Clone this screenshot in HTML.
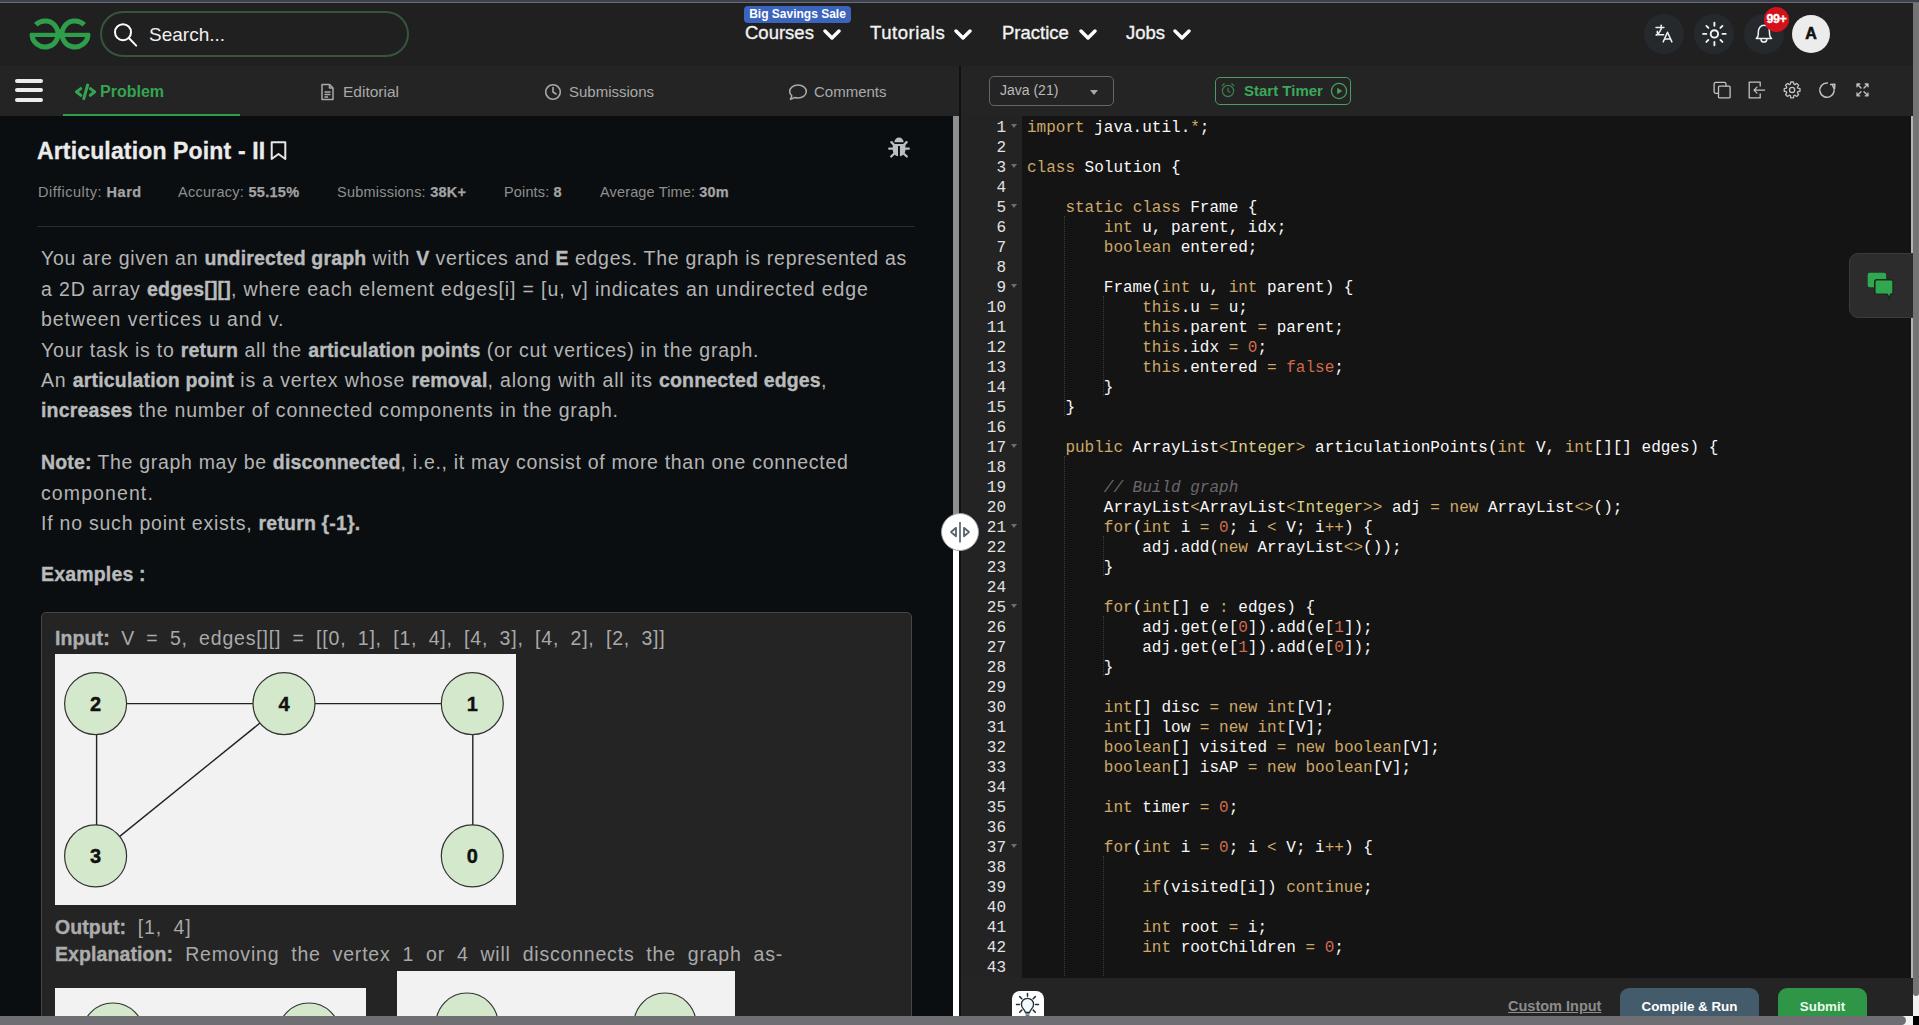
<!DOCTYPE html>
<html><head><meta charset="utf-8">
<style>
*{box-sizing:border-box;margin:0;padding:0}
html,body{width:1919px;height:1025px;overflow:hidden;background:#0b0e10;font-family:"Liberation Sans",sans-serif}
.a{position:absolute}
.nw{white-space:nowrap}
#topstrip{left:0;top:0;width:1919px;height:3px;background:#3c3f4c}
#topstrip2{left:0;top:2px;width:1919px;height:1px;background:#6a6c78}
#header{left:0;top:3px;width:1913px;height:63px;background:#202020}
#tabbar{left:0;top:66px;width:953px;height:50px;background:#242424}
#tooldbar{left:961px;top:66px;width:952px;height:50px;background:#242424}
#leftpane{left:0;top:116px;width:953px;height:900px;background:#0b0e10;overflow:hidden}
#rscroll{left:1913px;top:3px;width:6px;height:993px;background:#747474;border-radius:0 0 3px 3px}
#hscroll{left:0;top:1016px;width:1906px;height:9px;background:#6f6e73;border-radius:0 5px 5px 0}
.navt{color:#f2f2f2;font-size:18.5px;top:22.2px;-webkit-text-stroke:0.35px #f2f2f2}
.chev{top:29px}
.circ{width:40px;height:40px;border-radius:50%;background:#25292d;top:14px}
.tab{top:83px;font-size:15px;color:#a9a9a9}
</style></head><body>
<div class="a" id="topstrip"></div><div class="a" id="topstrip2"></div>
<div class="a" id="header"></div>
<!-- logo -->
<svg class="a" style="left:0;top:0" width="100" height="60" viewBox="0 0 100 60">
 <g fill="none" stroke="#2f9e4b" stroke-width="5">
  <path d="M35.8,24.8 A13,13 0 1 1 32,34"/>
  <path d="M84.2,24.8 A13,13 0 1 0 88,34"/>
 </g>
 <rect x="30" y="32.8" width="60" height="4.2" fill="#2f9e4b"/>
</svg>
<!-- search -->
<div class="a" style="left:100px;top:11px;width:309px;height:46px;border:2px solid #37553d;border-radius:23px"></div>
<svg class="a" style="left:110px;top:20px" width="30" height="30" viewBox="0 0 30 30">
 <circle cx="13" cy="12.2" r="8" fill="none" stroke="#fff" stroke-width="2"/>
 <line x1="18.8" y1="18" x2="26.2" y2="25.6" stroke="#fff" stroke-width="2" stroke-linecap="round"/>
</svg>
<div class="a nw" style="left:149px;top:23.5px;font-size:19px;color:#f0f0f0">Search...</div>
<!-- nav -->
<div class="a nw" style="left:744px;top:6px;width:107px;height:17px;background:#3b64bd;border-radius:4px;color:#fff;font-size:12px;line-height:17px;text-align:center;font-weight:bold">Big Savings Sale</div>
<div class="a nw navt" style="left:745px">Courses</div>
<div class="a nw navt" style="left:870px;letter-spacing:0.55px">Tutorials</div>
<div class="a nw navt" style="left:1002px">Practice</div>
<div class="a nw navt" style="left:1126px">Jobs</div>
<svg class="a chev" style="left:823px" width="18" height="11" viewBox="0 0 18 11"><path d="M2,2 L9,9 L16,2" fill="none" stroke="#fff" stroke-width="3.4" stroke-linecap="round" stroke-linejoin="round"/></svg>
<svg class="a chev" style="left:954px" width="18" height="11" viewBox="0 0 18 11"><path d="M2,2 L9,9 L16,2" fill="none" stroke="#fff" stroke-width="3.4" stroke-linecap="round" stroke-linejoin="round"/></svg>
<svg class="a chev" style="left:1079px" width="18" height="11" viewBox="0 0 18 11"><path d="M2,2 L9,9 L16,2" fill="none" stroke="#fff" stroke-width="3.4" stroke-linecap="round" stroke-linejoin="round"/></svg>
<svg class="a chev" style="left:1173px" width="18" height="11" viewBox="0 0 18 11"><path d="M2,2 L9,9 L16,2" fill="none" stroke="#fff" stroke-width="3.4" stroke-linecap="round" stroke-linejoin="round"/></svg>
<!-- right header icons -->
<div class="a circ" style="left:1644px"></div>
<div class="a circ" style="left:1694px"></div>
<div class="a circ" style="left:1744px"></div>
<div class="a" style="left:1792px;top:15px;width:38px;height:38px;border-radius:50%;background:#ececec;color:#111;font-weight:bold;font-size:16px;line-height:38px;text-align:center;-webkit-text-stroke:0.6px #111">A</div>


<div class="a" id="tabbar"></div>
<div class="a" id="tooldbar"></div>
<div class="a" id="leftpane"></div>
<!-- tabs -->
<div class="a" style="left:15px;top:79px;width:28px;height:4px;border-radius:2px;background:#ececec"></div>
<div class="a" style="left:15px;top:88px;width:28px;height:4px;border-radius:2px;background:#ececec"></div>
<div class="a" style="left:15px;top:98px;width:28px;height:4px;border-radius:2px;background:#ececec"></div>
<div class="a" style="left:63px;top:114px;width:177px;height:2px;background:#2f9e4b"></div>
<svg class="a" style="left:74px;top:83px" width="24" height="18" viewBox="0 0 24 18"><g fill="none" stroke="#34a452" stroke-width="3" stroke-linecap="round" stroke-linejoin="round"><path d="M6.8,5.6 L2.4,8.9 L6.8,12.3"/><path d="M16.3,5.6 L20.7,8.9 L16.3,12.3"/><path d="M13.6,2 L9.8,15.6"/></g></svg>
<div class="a nw" style="left:100px;top:83.3px;font-size:16px;font-weight:bold;color:#34a452">Problem</div>
<svg class="a" style="left:320px;top:83px" width="15" height="18" viewBox="0 0 15 18">
 <g fill="none" stroke="#a9a9a9" stroke-width="1.5" stroke-linejoin="round"><path d="M2,1.5 H9.5 L13,5 V16.5 H2 Z"/><path d="M9.5,1.5 V5 H13"/><path d="M4.5,9 H10.5 M4.5,11.5 H10.5 M4.5,14 H8"/></g>
</svg>
<div class="a nw tab" style="left:343px;font-size:15.5px">Editorial</div>
<svg class="a" style="left:544px;top:83px" width="18" height="18" viewBox="0 0 18 18">
 <g fill="none" stroke="#a9a9a9" stroke-width="1.6" stroke-linecap="round"><circle cx="9" cy="9" r="7.3"/><path d="M9,4.5 V9 L12,11"/></g>
</svg>
<div class="a nw tab" style="left:569px">Submissions</div>
<svg class="a" style="left:788px;top:83px" width="20" height="18" viewBox="0 0 20 18">
 <path d="M10,2 C14.6,2 18.3,4.9 18.3,8.5 C18.3,12.1 14.6,15 10,15 C8.9,15 7.9,14.8 6.9,14.5 L2.5,16.3 L3.8,12.8 C2.4,11.6 1.7,10.1 1.7,8.5 C1.7,4.9 5.4,2 10,2 Z" fill="none" stroke="#a9a9a9" stroke-width="1.6" stroke-linejoin="round"/>
</svg>
<div class="a nw tab" style="left:814px">Comments</div>

<div class="a nw" style="left:37px;top:135.53px;font-size:23px;line-height:30px;color:#ebebeb;letter-spacing:0.15px;word-spacing:0.0px;font-weight:bold;-webkit-text-stroke:0.3px #ebebeb">Articulation Point - II</div>
<svg class="a" style="left:269px;top:140px" width="19" height="22" viewBox="0 0 19 22"><path d="M2.7,2.3 H16.3 V19 L9.5,14 L2.7,19 Z" fill="none" stroke="#e6e6e6" stroke-width="2" stroke-linejoin="round"/></svg>
<svg class="a" style="left:884px;top:132px" width="30" height="30" viewBox="0 0 30 30"><g fill="#bcbfc1">
<path d="M10.4,10.2 A4.6,4.6 0 0 1 19.6,10.2 Z"/>
<path d="M8.8,12 H21.4 V18 C21.4,21.8 18.6,24.3 15,24.3 C11.4,24.3 8.8,21.8 8.8,18 Z"/></g>
<rect x="14" y="14" width="1.9" height="11" fill="#0b0e10"/>
<g stroke="#bcbfc1" stroke-width="2.3" stroke-linecap="round" fill="none">
<path d="M7.4,10.1 L9.9,12.8 M22.6,10.1 L20.1,12.8 M5.2,16.7 H9 M24.8,16.7 H21 M7.2,24.5 L9.8,22 M22.8,24.5 L20.2,22"/>
</g></svg>
<div class="a nw" style="left:38px;top:177.48px;font-size:14.5px;line-height:30px;color:#8e8e8e;letter-spacing:0.5px;word-spacing:0.0px;">Difficulty: <b style="color:#a3a3a3;-webkit-text-stroke:0.25px #a3a3a3">Hard</b></div>
<div class="a nw" style="left:178px;top:177.48px;font-size:14.5px;line-height:30px;color:#8e8e8e;letter-spacing:0.28px;word-spacing:0.0px;">Accuracy: <b style="color:#a3a3a3;-webkit-text-stroke:0.25px #a3a3a3">55.15%</b></div>
<div class="a nw" style="left:337px;top:177.48px;font-size:14.5px;line-height:30px;color:#8e8e8e;letter-spacing:0.22px;word-spacing:0.0px;">Submissions: <b style="color:#a3a3a3;-webkit-text-stroke:0.25px #a3a3a3">38K+</b></div>
<div class="a nw" style="left:504px;top:177.48px;font-size:14.5px;line-height:30px;color:#8e8e8e;letter-spacing:0.14px;word-spacing:0.0px;">Points: <b style="color:#a3a3a3;-webkit-text-stroke:0.25px #a3a3a3">8</b></div>
<div class="a nw" style="left:600px;top:177.48px;font-size:14.5px;line-height:30px;color:#8e8e8e;letter-spacing:0.15px;word-spacing:0.0px;">Average Time: <b style="color:#a3a3a3;-webkit-text-stroke:0.25px #a3a3a3">30m</b></div>
<div class="a" style="left:37px;top:226px;width:878px;height:1px;background:#282c2d"></div>
<div class="a nw" style="left:41px;top:243.24px;font-size:19.5px;line-height:30px;color:#b4b4b4;letter-spacing:0.725px;word-spacing:0.0px;">You are given an <b style="color:#b9bbbc;letter-spacing:0.17px;-webkit-text-stroke:0.35px #b9bbbc">undirected graph</b> with <b style="color:#b9bbbc;letter-spacing:0.17px;-webkit-text-stroke:0.35px #b9bbbc">V</b> vertices and <b style="color:#b9bbbc;letter-spacing:0.17px;-webkit-text-stroke:0.35px #b9bbbc">E</b> edges. The graph is represented as</div>
<div class="a nw" style="left:41px;top:274.24px;font-size:19.5px;line-height:30px;color:#b4b4b4;letter-spacing:0.87px;word-spacing:0.0px;">a 2D array <b style="color:#b9bbbc;letter-spacing:0.17px;-webkit-text-stroke:0.35px #b9bbbc">edges[][]</b>, where each element edges[i] = [u, v] indicates an undirected edge</div>
<div class="a nw" style="left:41px;top:304.24px;font-size:19.5px;line-height:30px;color:#b4b4b4;letter-spacing:0.95px;word-spacing:0.0px;">between vertices u and v.</div>
<div class="a nw" style="left:41px;top:335.24px;font-size:19.5px;line-height:30px;color:#b4b4b4;letter-spacing:0.79px;word-spacing:0.0px;">Your task is to <b style="color:#b9bbbc;letter-spacing:0.17px;-webkit-text-stroke:0.35px #b9bbbc">return</b> all the <b style="color:#b9bbbc;letter-spacing:0.17px;-webkit-text-stroke:0.35px #b9bbbc">articulation points</b> (or cut vertices) in the graph.</div>
<div class="a nw" style="left:41px;top:365.24px;font-size:19.5px;line-height:30px;color:#b4b4b4;letter-spacing:0.84px;word-spacing:0.0px;">An <b style="color:#b9bbbc;letter-spacing:0.17px;-webkit-text-stroke:0.35px #b9bbbc">articulation point</b> is a vertex whose <b style="color:#b9bbbc;letter-spacing:0.17px;-webkit-text-stroke:0.35px #b9bbbc">removal</b>, along with all its <b style="color:#b9bbbc;letter-spacing:0.17px;-webkit-text-stroke:0.35px #b9bbbc">connected edges</b>,</div>
<div class="a nw" style="left:41px;top:395.24px;font-size:19.5px;line-height:30px;color:#b4b4b4;letter-spacing:0.81px;word-spacing:0.0px;"><b style="color:#b9bbbc;letter-spacing:0.17px;-webkit-text-stroke:0.35px #b9bbbc">increases</b> the number of connected components in the graph.</div>
<div class="a nw" style="left:41px;top:447.24px;font-size:19.5px;line-height:30px;color:#b4b4b4;letter-spacing:0.69px;word-spacing:0.0px;"><b style="color:#b9bbbc;letter-spacing:0.17px;-webkit-text-stroke:0.35px #b9bbbc">Note:</b> The graph may be <b style="color:#b9bbbc;letter-spacing:0.17px;-webkit-text-stroke:0.35px #b9bbbc">disconnected</b>, i.e., it may consist of more than one connected</div>
<div class="a nw" style="left:41px;top:478.24px;font-size:19.5px;line-height:30px;color:#b4b4b4;letter-spacing:1.1px;word-spacing:0.0px;">component.</div>
<div class="a nw" style="left:41px;top:508.24px;font-size:19.5px;line-height:30px;color:#b4b4b4;letter-spacing:0.77px;word-spacing:0.0px;">If no such point exists, <b style="color:#b9bbbc;letter-spacing:0.17px;-webkit-text-stroke:0.35px #b9bbbc">return {-1}.</b></div>
<div class="a nw" style="left:41px;top:559.24px;font-size:19.5px;line-height:30px;color:#b4b4b4;letter-spacing:0.47px;word-spacing:0.0px;"><b style="color:#b9bbbc;letter-spacing:0.17px;-webkit-text-stroke:0.35px #b9bbbc">Examples :</b></div>
<div class="a" style="left:41px;top:612px;width:871px;height:420px;background:#242424;border:1px solid #464646;border-radius:5px"></div>
<div class="a nw" style="left:55px;top:623.24px;font-size:19.5px;line-height:30px;color:#a9a9a9;letter-spacing:0.8px;word-spacing:5.16px;"><b style="color:#adadad;letter-spacing:0.1px;-webkit-text-stroke:0.35px #adadad">Input:</b> V = 5, edges[][] = [[0, 1], [1, 4], [4, 3], [4, 2], [2, 3]]</div>
<div class="a nw" style="left:55px;top:912.24px;font-size:19.5px;line-height:30px;color:#a9a9a9;letter-spacing:0.8px;word-spacing:5.5px;"><b style="color:#adadad;letter-spacing:0.1px;-webkit-text-stroke:0.35px #adadad">Output:</b> [1, 4]</div>
<div class="a nw" style="left:55px;top:939.24px;font-size:19.5px;line-height:30px;color:#a9a9a9;letter-spacing:0.8px;word-spacing:5.7px;"><b style="color:#adadad;letter-spacing:0.1px;-webkit-text-stroke:0.35px #adadad">Explanation:</b> Removing the vertex 1 or 4 will disconnects the graph as-</div>
<svg class="a" style="left:55px;top:654px" width="461" height="251" viewBox="0 0 461 251">
<rect width="461" height="251" fill="#f2f2f2"/>
<g stroke="#222" stroke-width="1.4">
<line x1="40.6" y1="49.6" x2="229" y2="49.6"/><line x1="229" y1="49.6" x2="417.3" y2="49.6"/>
<line x1="41.6" y1="49.6" x2="41.6" y2="201.9"/><line x1="417.8" y1="49.6" x2="417.8" y2="201.9"/>
<line x1="229" y1="49.6" x2="40.6" y2="201.9"/>
</g>
<g fill="#d4e8cc" stroke="#333" stroke-width="1.2">
<circle cx="40.6" cy="49.6" r="31"/><circle cx="229" cy="49.6" r="31"/><circle cx="417.3" cy="49.6" r="31"/>
<circle cx="40.6" cy="201.9" r="31"/><circle cx="417.3" cy="201.9" r="31"/>
</g>
<g font-family="Liberation Sans" font-weight="bold" font-size="20" fill="#111" text-anchor="middle" stroke="#111" stroke-width="0.4">
<text x="40.6" y="57">2</text><text x="229" y="57">4</text><text x="417.3" y="57">1</text><text x="40.6" y="209.3">3</text><text x="417.3" y="209.3">0</text>
</g></svg>
<svg class="a" style="left:55px;top:988px" width="311" height="40" viewBox="0 0 311 40"><rect width="311" height="40" fill="#f2f2f2"/>
<g fill="#d4e8cc" stroke="#333" stroke-width="1.2"><circle cx="58" cy="46" r="31"/><circle cx="254" cy="46" r="31"/></g></svg>
<svg class="a" style="left:397px;top:971px" width="338" height="50" viewBox="0 0 338 50"><rect width="338" height="50" fill="#f2f2f2"/>
<g fill="#d4e8cc" stroke="#333" stroke-width="1.2"><circle cx="70" cy="53" r="31"/><circle cx="268" cy="53" r="31"/></g></svg>
<style>
.code{font-family:"Liberation Mono",monospace;font-size:16px;line-height:20px;white-space:pre}
.code .ln,.code .cl{height:20px}
.kw{color:#CDA869}.cn{color:#CF6A4C}.sp{color:#DAD085}.cm{color:#6b676c;font-style:italic}
</style><div class="a" style="left:961px;top:116px;width:952px;height:900px;background:#242424"></div>
<div class="a" style="left:965px;top:116px;width:57px;height:862px;background:#232323"></div>
<div class="a" style="left:1022px;top:116px;width:889px;height:862px;background:#141414"></div>
<div class="a" style="left:1064px;top:216px;width:0;height:200px;border-left:1px dotted #3b3b3b"></div>
<div class="a" style="left:1064px;top:456px;width:0;height:520px;border-left:1px dotted #3b3b3b"></div>
<div class="a" style="left:1103px;top:296px;width:0;height:100px;border-left:1px dotted #3b3b3b"></div>
<div class="a" style="left:1103px;top:536px;width:0;height:40px;border-left:1px dotted #3b3b3b"></div>
<div class="a" style="left:1103px;top:616px;width:0;height:60px;border-left:1px dotted #3b3b3b"></div>
<div class="a" style="left:1103px;top:856px;width:0;height:120px;border-left:1px dotted #3b3b3b"></div>
<div class="a code" style="left:961px;top:117.5px;width:45px;text-align:right;color:#e2e2e2"><div class="ln">1</div><div class="ln">2</div><div class="ln">3</div><div class="ln">4</div><div class="ln">5</div><div class="ln">6</div><div class="ln">7</div><div class="ln">8</div><div class="ln">9</div><div class="ln">10</div><div class="ln">11</div><div class="ln">12</div><div class="ln">13</div><div class="ln">14</div><div class="ln">15</div><div class="ln">16</div><div class="ln">17</div><div class="ln">18</div><div class="ln">19</div><div class="ln">20</div><div class="ln">21</div><div class="ln">22</div><div class="ln">23</div><div class="ln">24</div><div class="ln">25</div><div class="ln">26</div><div class="ln">27</div><div class="ln">28</div><div class="ln">29</div><div class="ln">30</div><div class="ln">31</div><div class="ln">32</div><div class="ln">33</div><div class="ln">34</div><div class="ln">35</div><div class="ln">36</div><div class="ln">37</div><div class="ln">38</div><div class="ln">39</div><div class="ln">40</div><div class="ln">41</div><div class="ln">42</div><div class="ln">43</div></div>
<div class="a code" style="left:1027px;top:117.5px;color:#f8f8f8"><div class="cl"><span class="kw">import</span> java.util.<span class="kw">*</span>;</div><div class="cl">&nbsp;</div><div class="cl"><span class="kw">class</span> Solution {</div><div class="cl">&nbsp;</div><div class="cl">    <span class="kw">static</span> <span class="kw">class</span> Frame {</div><div class="cl">        <span class="kw">int</span> u, parent, idx;</div><div class="cl">        <span class="kw">boolean</span> entered;</div><div class="cl">&nbsp;</div><div class="cl">        Frame(<span class="kw">int</span> u, <span class="kw">int</span> parent) {</div><div class="cl">            <span class="kw">this</span>.u <span class="kw">=</span> u;</div><div class="cl">            <span class="kw">this</span>.parent <span class="kw">=</span> parent;</div><div class="cl">            <span class="kw">this</span>.idx <span class="kw">=</span> <span class="cn">0</span>;</div><div class="cl">            <span class="kw">this</span>.entered <span class="kw">=</span> <span class="cn">false</span>;</div><div class="cl">        }</div><div class="cl">    }</div><div class="cl">&nbsp;</div><div class="cl">    <span class="kw">public</span> ArrayList<span class="kw">&lt;</span><span class="sp">Integer</span><span class="kw">&gt;</span> articulationPoints(<span class="kw">int</span> V, <span class="kw">int</span>[][] edges) {</div><div class="cl">&nbsp;</div><div class="cl">        <i class="cm">// Build graph</i></div><div class="cl">        ArrayList<span class="kw">&lt;</span>ArrayList<span class="kw">&lt;</span><span class="sp">Integer</span><span class="kw">&gt;</span><span class="kw">&gt;</span> adj <span class="kw">=</span> <span class="kw">new</span> ArrayList<span class="kw">&lt;</span><span class="kw">&gt;</span>();</div><div class="cl">        <span class="kw">for</span>(<span class="kw">int</span> i <span class="kw">=</span> <span class="cn">0</span>; i <span class="kw">&lt;</span> V; i<span class="kw">++</span>) {</div><div class="cl">            adj.add(<span class="kw">new</span> ArrayList<span class="kw">&lt;</span><span class="kw">&gt;</span>());</div><div class="cl">        }</div><div class="cl">&nbsp;</div><div class="cl">        <span class="kw">for</span>(<span class="kw">int</span>[] e <span class="kw">:</span> edges) {</div><div class="cl">            adj.get(e[<span class="cn">0</span>]).add(e[<span class="cn">1</span>]);</div><div class="cl">            adj.get(e[<span class="cn">1</span>]).add(e[<span class="cn">0</span>]);</div><div class="cl">        }</div><div class="cl">&nbsp;</div><div class="cl">        <span class="kw">int</span>[] disc <span class="kw">=</span> <span class="kw">new</span> <span class="kw">int</span>[V];</div><div class="cl">        <span class="kw">int</span>[] low <span class="kw">=</span> <span class="kw">new</span> <span class="kw">int</span>[V];</div><div class="cl">        <span class="kw">boolean</span>[] visited <span class="kw">=</span> <span class="kw">new</span> <span class="kw">boolean</span>[V];</div><div class="cl">        <span class="kw">boolean</span>[] isAP <span class="kw">=</span> <span class="kw">new</span> <span class="kw">boolean</span>[V];</div><div class="cl">&nbsp;</div><div class="cl">        <span class="kw">int</span> timer <span class="kw">=</span> <span class="cn">0</span>;</div><div class="cl">&nbsp;</div><div class="cl">        <span class="kw">for</span>(<span class="kw">int</span> i <span class="kw">=</span> <span class="cn">0</span>; i <span class="kw">&lt;</span> V; i<span class="kw">++</span>) {</div><div class="cl">&nbsp;</div><div class="cl">            <span class="kw">if</span>(visited[i]) <span class="kw">continue</span>;</div><div class="cl">&nbsp;</div><div class="cl">            <span class="kw">int</span> root <span class="kw">=</span> i;</div><div class="cl">            <span class="kw">int</span> rootChildren <span class="kw">=</span> <span class="cn">0</span>;</div><div class="cl">&nbsp;</div></div>
<div class="a" style="left:1011px;top:124px;width:0;height:0;border-left:3.5px solid transparent;border-right:3.5px solid transparent;border-top:4px solid #6f6f6f"></div>
<div class="a" style="left:1011px;top:164px;width:0;height:0;border-left:3.5px solid transparent;border-right:3.5px solid transparent;border-top:4px solid #6f6f6f"></div>
<div class="a" style="left:1011px;top:204px;width:0;height:0;border-left:3.5px solid transparent;border-right:3.5px solid transparent;border-top:4px solid #6f6f6f"></div>
<div class="a" style="left:1011px;top:844px;width:0;height:0;border-left:3.5px solid transparent;border-right:3.5px solid transparent;border-top:4px solid #6f6f6f"></div>
<div class="a" style="left:1011px;top:284px;width:0;height:0;border-left:3.5px solid transparent;border-right:3.5px solid transparent;border-top:4px solid #6f6f6f"></div>
<div class="a" style="left:1011px;top:444px;width:0;height:0;border-left:3.5px solid transparent;border-right:3.5px solid transparent;border-top:4px solid #6f6f6f"></div>
<div class="a" style="left:1011px;top:524px;width:0;height:0;border-left:3.5px solid transparent;border-right:3.5px solid transparent;border-top:4px solid #6f6f6f"></div>
<div class="a" style="left:1011px;top:604px;width:0;height:0;border-left:3.5px solid transparent;border-right:3.5px solid transparent;border-top:4px solid #6f6f6f"></div>
<div class="a" style="left:953px;top:66px;width:6px;height:50px;background:#242424"></div>
<div class="a" style="left:953px;top:116px;width:6px;height:900px;background:#ffffff"></div>
<div class="a" style="left:953px;top:116px;width:6px;height:400px;background:#8f8f8f"></div>
<div class="a" style="left:959px;top:66px;width:2px;height:950px;background:#111"></div>
<div class="a" style="left:940.5px;top:512.5px;width:38px;height:38px;border-radius:50%;background:#fff;border:1px solid #9aa3ab"></div>
<svg class="a" style="left:940.5px;top:512.5px" width="38" height="38" viewBox="0 0 38 38"><g fill="none" stroke="#56626b" stroke-width="1.8" stroke-linejoin="round"><path d="M15,14.8 L10,19 L15,23.2 Z"/><path d="M23,14.8 L28,19 L23,23.2 Z"/></g><line x1="19" y1="9" x2="19" y2="29.5" stroke="#2c363e" stroke-width="1.3"/></svg>
<svg class="a" style="left:1650px;top:20px" width="30" height="28" viewBox="0 0 30 28"><g fill="none" stroke="#f0f0f0" stroke-width="1.5" stroke-linecap="round" stroke-linejoin="round"><path d="M6,7.4 H13.9"/><path d="M11.2,5.3 V7.4"/><path d="M11.5,7.7 C10.9,10.6 9.6,12.8 6.3,15"/><path d="M7.4,11.4 C6.9,12.6 7.6,13.6 9,14.2"/><path d="M6.3,14.8 H13.6"/><path d="M13.2,21.9 L17.5,12.2 L21.9,21.9"/><path d="M14.7,19 H20.4"/></g></svg>
<svg class="a" style="left:1698px;top:18px" width="32" height="32" viewBox="0 0 32 32"><g fill="none" stroke="#f4f4f4" stroke-linecap="round"><circle cx="16.4" cy="15.9" r="3.7" stroke-width="1.9"/><path stroke-width="1.9" d="M16.4,4.6 V7.8 M16.4,24 V27.2 M5.1,15.9 H8.3 M24.5,15.9 H27.7 M8.4,7.9 L10.4,9.9 M22.4,21.9 L24.4,23.9 M8.4,23.9 L10.4,21.9 M22.4,9.9 L24.4,7.9"/></g></svg>
<svg class="a" style="left:1753px;top:23px" width="22" height="22" viewBox="0 0 22 22"><g fill="none" stroke="#f0f0f0" stroke-width="1.5" stroke-linejoin="round" stroke-linecap="round"><path d="M3.3,15.6 C4.8,14.3 5.3,13 5.3,11 V9 C5.3,5.2 7.6,2.3 10.9,2.3 C14.2,2.3 16.5,5.2 16.5,9 V11 C16.5,13 17,14.3 18.6,15.6 Z"/><path d="M8,16.2 A2.9,2.9 0 0 0 13.8,16.2"/></g></svg>
<div class="a" style="left:1764px;top:7px;width:25px;height:25px;border-radius:50%;background:#d5121b;color:#fff;font-weight:bold;font-size:12.5px;line-height:25px;text-align:center;letter-spacing:-0.4px;-webkit-text-stroke:0.3px #fff">99+</div>
<div class="a" style="left:989px;top:76px;width:125px;height:30px;border:1px solid #666;border-radius:5px"></div>
<div class="a nw" style="left:1000px;top:82px;font-size:14px;color:#bababa;line-height:17px">Java (21)</div>
<div class="a" style="left:1090px;top:90px;width:0;height:0;border-left:4.5px solid transparent;border-right:4.5px solid transparent;border-top:5px solid #a8a8a8"></div>
<div class="a" style="left:1215px;top:77px;width:136px;height:28px;border:1px solid #4a9c60;border-radius:5px"></div>
<svg class="a" style="left:1219px;top:81px" width="18" height="18" viewBox="0 0 18 18"><g fill="none" stroke="#3c8050" stroke-width="1.2" stroke-linecap="round"><circle cx="9" cy="10" r="5.6"/><path d="M9,7.2 V10 L10.8,11.2"/><path d="M3.2,4.6 L5.2,2.8"/><path d="M14.8,4.6 L12.8,2.8"/></g></svg>
<div class="a nw" style="left:1244px;top:82px;font-size:15px;font-weight:bold;color:#3ba85a;line-height:17px">Start Timer</div>
<svg class="a" style="left:1330px;top:82px" width="18" height="18" viewBox="0 0 18 18"><circle cx="9" cy="9" r="7.6" fill="none" stroke="#4a9c60" stroke-width="1.3"/><path d="M7.2,5.8 L12.2,9 L7.2,12.2 Z" fill="#3ba85a"/></svg>
<svg class="a" style="left:1705px;top:76px" width="175" height="30" viewBox="0 0 175 30"><g fill="none" stroke="#c2c2c2" stroke-width="1.3" stroke-linecap="round" stroke-linejoin="round">
<path d="M21,10.2 V8 A1.6,1.6 0 0 0 19.4,6.4 H10.7 A1.6,1.6 0 0 0 9.1,8 V15.7 A1.6,1.6 0 0 0 10.7,17.3 H13.5"/>
<rect x="13.5" y="10.2" width="11.6" height="11.7" rx="1"/>
<path d="M55.2,10 V6.2 H44.2 V21.9 H55.2 V17.8"/>
<path d="M59.7,14.1 H49 M52,11.1 L49,14.1 L52,17.1"/>
<path d="M94.98,12.55 L94.98,15.25 L92.83,15.67 L92.41,16.70 L93.63,18.52 L91.72,20.43 L89.90,19.21 L88.87,19.63 L88.45,21.78 L85.75,21.78 L85.33,19.63 L84.30,19.21 L82.48,20.43 L80.57,18.52 L81.79,16.70 L81.37,15.67 L79.22,15.25 L79.22,12.55 L81.37,12.13 L81.79,11.10 L80.57,9.28 L82.48,7.37 L84.30,8.59 L85.33,8.17 L85.75,6.02 L88.45,6.02 L88.87,8.17 L89.90,8.59 L91.72,7.37 L93.63,9.28 L92.41,11.10 L92.83,12.13 Z"/>
<circle cx="87.1" cy="13.9" r="2.6"/>
<path d="M122.3,6.9 A7.2,7.2 0 1 0 127.6,9.6" stroke-width="1.5"/>
<path d="M125.6,8.6 L129.8,8.3 L129.5,12.6" stroke-width="1.5"/>
<path d="M152,8 L156,12 M152,8 H154.8 M152,8 V10.8"/>
<path d="M163,8 L159,12 M163,8 H160.2 M163,8 V10.8"/>
<path d="M152,19.8 L156,15.8 M152,19.8 H154.8 M152,19.8 V17"/>
<path d="M163,19.8 L159,15.8 M163,19.8 H160.2 M163,19.8 V17"/>
</g></svg>
<div class="a" style="left:961px;top:978px;width:952px;height:38px;background:#242424"></div>
<div class="a" style="left:1012px;top:990.5px;width:32px;height:34px;border-radius:8px;background:#fff"></div>
<svg class="a" style="left:1012px;top:990px" width="32" height="26" viewBox="0 0 32 26"><g fill="none" stroke="#1f2e38" stroke-width="1.5" stroke-linecap="round"><path d="M15.5,3.4 V6.3 M4.5,14.4 H7.4 M23.6,14.4 H26.5 M7.7,6.6 L9.8,8.7 M23.3,6.6 L21.2,8.7 M7.7,22.2 L9.8,20.1 M23.3,22.2 L21.2,20.1"/></g><path d="M13.4,22.4 C12.8,19.6 9.4,18 9.4,14.4 A6.1,6.1 0 0 1 21.6,14.4 C21.6,18 18.2,19.6 17.6,22.4 Z" fill="#f4f9fc" stroke="#1f2e38" stroke-width="1.35" stroke-linejoin="round"/><path d="M13.4,23.8 H17.6 M13.6,25.2 H17.4" stroke="#3a4a55" stroke-width="1.1"/></svg>
<div class="a nw" style="left:1508px;top:998px;font-size:14.5px;font-weight:bold;color:#8c8c8c;text-decoration:underline;line-height:17px">Custom Input</div>
<div class="a nw" style="left:1620px;top:988px;width:139px;height:40px;border-radius:9px;background:#435b6b;color:#fff;font-weight:bold;font-size:13.4px;line-height:37px;text-align:center">Compile &amp; Run</div>
<div class="a nw" style="left:1778px;top:988px;width:89px;height:40px;border-radius:9px;background:#2f9648;color:#e9fbe9;font-weight:bold;font-size:13.4px;line-height:37px;text-align:center">Submit</div>
<div class="a" style="left:1911px;top:116px;width:2px;height:862px;background:#b4b4b4"></div>
<div class="a" style="left:1849px;top:253px;width:70px;height:65px;border-radius:9px 0 0 9px;background:#2c2c2c;border:1px solid #3b3b3b"></div>
<svg class="a" style="left:1865px;top:270px" width="32" height="32" viewBox="0 0 32 32"><rect x="2.7" y="2.7" width="18.4" height="14.5" rx="2" fill="#2fa84f"/><path d="M11.8,9.8 H26.1 A2,2 0 0 1 28.1,11.8 V22.2 A2,2 0 0 1 26.1,24.2 H25.6 L24.6,28.2 L22,24.2 H11.8 A2,2 0 0 1 9.8,22.2 V11.8 A2,2 0 0 1 11.8,9.8 Z" fill="#2fa84f" stroke="#1b2a1e" stroke-width="1.6"/></svg>
<div class="a" style="left:1913px;top:3px;width:6px;height:1013px;background:#f1f1f1"></div><div class="a" id="rscroll"></div><div class="a" style="left:0;top:1016px;width:1913px;height:9px;background:#f1f1f1"></div><div class="a" id="hscroll"></div><div class="a" style="left:1913px;top:1016px;width:6px;height:9px;background:#000"></div></body></html>
